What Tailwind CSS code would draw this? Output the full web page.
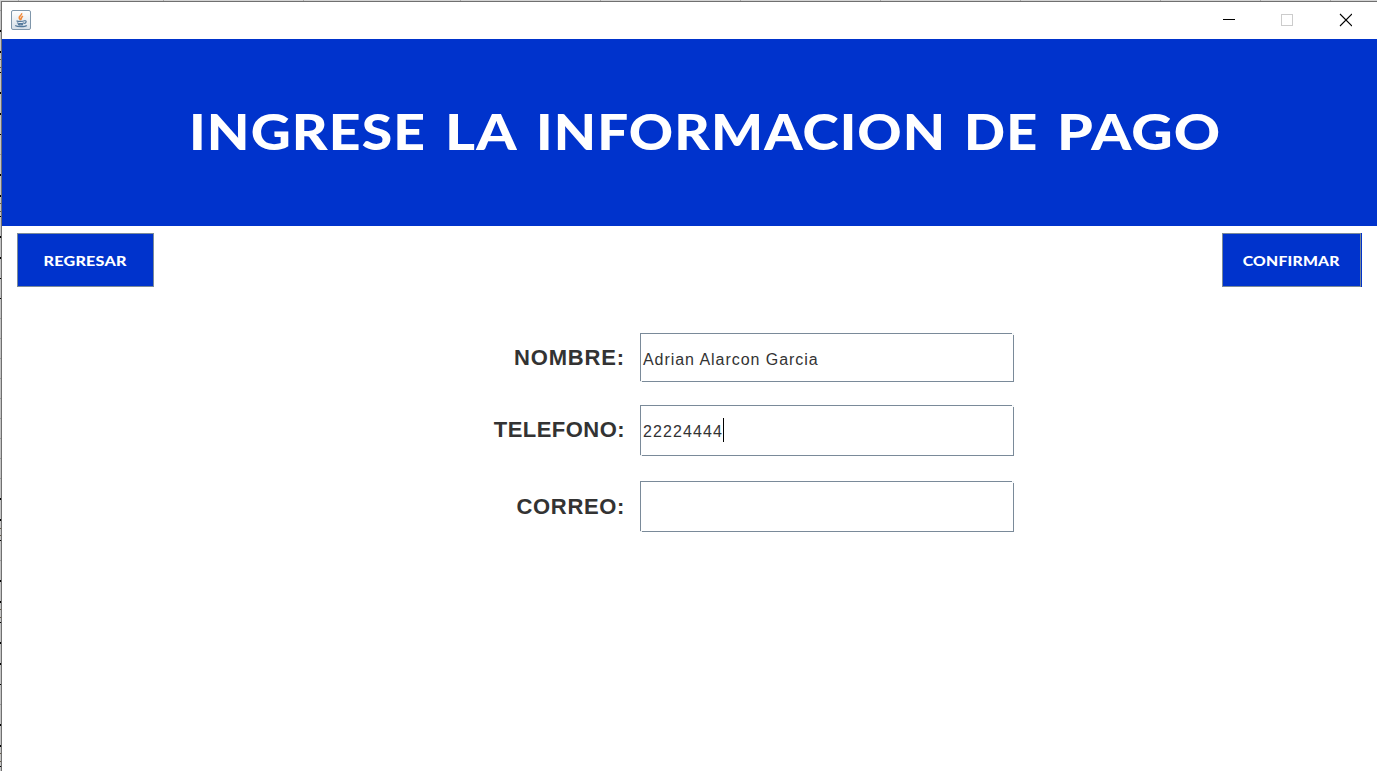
<!DOCTYPE html>
<html lang="es">
<head>
<meta charset="utf-8">
<title>Pago</title>
<script src="https://cdn.jsdelivr.net/npm/@tailwindcss/browser@4"></script>
</head>
<body class="h-[771px] w-[1377px] overflow-hidden bg-white">
<div class="flex h-[771px] flex-col">
  <svg class="block h-px w-full shrink-0" viewBox="0 0 1377 1" shape-rendering="crispEdges"><path fill="#d4d4d4" d="M0 0h1377v1H0z"/><path fill="#ababab" d="M18 0h1v1h-1zM163 0h1v1h-1zM303 0h1v1h-1zM460 0h1v1h-1zM600 0h1v1h-1zM740 0h1v1h-1zM880 0h1v1h-1zM1020 0h1v1h-1zM1160 0h1v1h-1zM1260 0h1v1h-1z M1330 0h1v1h-1z"/></svg>
  <div class="flex min-h-0 flex-1">
    <svg class="block h-[770px] w-px shrink-0" viewBox="0 1 1 770" shape-rendering="crispEdges" fill="none">
      <path stroke="#c4c4c4" d="M.5 0v771"/>
      <path stroke="#999" d="M.5 10v1M.5 154v1M.5 318v1M.5 338v1M.5 358v1M.5 378v1M.5 398v1M.5 418v1M.5 438v1M.5 458v1M.5 478v1M.5 560v1M.5 704v1"/>
      <path stroke="#000" d="M.5 30v2M.5 51v2M.5 72v1M.5 92v2M.5 113v2M.5 134v1M.5 174v2M.5 195v2M.5 216v1M.5 236v2M.5 257v2M.5 278v1M.5 298v1M.5 498v2M.5 519v2M.5 540v1M.5 580v2M.5 601v2M.5 622v1M.5 642v2M.5 663v2M.5 684v1M.5 724v2M.5 745v2M.5 766v1"/>
      <path stroke="#655c48" d="M.5 59v1M.5 67v1M.5 203v1M.5 211v1M.5 528v1M.5 535v1M.5 609v1M.5 617v1M.5 753v1M.5 761v1"/>
    </svg>
    <main class="flex min-w-0 flex-1 flex-col border-t border-l border-[#707070] bg-white">
      <header class="flex h-[37px] shrink-0 items-start justify-between pl-[9px] pr-[25px] pt-2">
        <svg class="size-5" viewBox="0 0 20 20" fill="none">
          <defs><linearGradient id="tile" x2="0" y2="1"><stop stop-color="#fff"/><stop offset="1" stop-color="#d5dfe8"/></linearGradient></defs>
          <rect x=".5" y=".5" width="19" height="19" rx="1.5" fill="url(#tile)" stroke="#7f96aa"/>
          <path d="M10.600 3.200c1 2-3.200 2.800-2.400 4.800.3.900 1.300 1.400 1.500 2.200M12 6.200c-1.600.9-2.500 1.700-1.500 3.500" stroke="#f08a3c" stroke-width="1.500"/>
          <path d="M5.500 10.700c1.500 1 6 1 8 0M6 12.700c2 1 5.300 1 7 0M7 14.400c1.700.7 3.700.7 5 0M13.500 10.500c2.500 0 2 2.500-.5 3M4.200 15.500c2 1.600 9.800 1.600 11.600 0" stroke="#54799b" stroke-width="1.200"/>
        </svg>
        <svg class="h-5 w-[130px]" viewBox="1222 10 130 20" fill="none" shape-rendering="crispEdges">
          <path d="M1223 19.500h12" stroke="#000"/>
          <rect x="1281.500" y="14.500" width="11" height="11" stroke="#ccc"/>
          <path d="M1340 14l12 12M1352 14l-12 12" stroke="#000" stroke-width="1.100" shape-rendering="auto"/>
        </svg>
      </header>
      <section class="flex h-[187px] shrink-0 bg-[#0033cc]">
        <h1 class="ml-[187px] mt-[60px] h-16 whitespace-nowrap font-['Lato'] text-[50px] font-black leading-[64px] text-white">
          <span class="inline-block w-[256px] origin-left scale-x-[1.105] tracking-[1px]">INGRESE</span><span class="inline-block w-[91px] origin-left scale-x-[1.15] tracking-[1px]">LA</span><span class="inline-block w-[428px] origin-left scale-x-[1.095] tracking-[1px]">INFORMACION</span><span class="inline-block w-[93px] origin-left scale-x-[1.08] tracking-[1px]">DE</span><span class="inline-block origin-left scale-x-[1.145] tracking-[1px]">PAGO</span>
        </h1>
      </section>
      <nav class="flex h-[62px] shrink-0 justify-between px-[15px] pt-[7px] font-['Lato'] text-[14px] font-black text-white">
        <button class="h-[54px] w-[137px] border border-[#7a8a99] bg-[#0033cc] pt-px"><span class="inline-block scale-x-[1.15] tracking-[0.2px]">REGRESAR</span></button>
        <div class="h-[54px] w-[140px] border-r border-[#0033cc]"><button class="h-[54px] w-[139px] border border-[#7a8a99] bg-[#0033cc] pt-px"><span class="inline-block scale-x-[1.12] tracking-[0.2px]">CONFIRMAR</span></button></div>
      </nav>
      <form class="flex flex-col pt-[45px] font-['Liberation_Sans'] text-[#333]">
        <div class="mb-[23px] flex h-[49px]">
          <label class="w-[623px] text-right text-[22px] font-bold leading-[49px] tracking-[0.85px]">NOMBRE:</label>
          <div class="relative ml-[15px] flex w-[374px] items-center border border-[#7a8a99] pl-[2px] pt-[5px] text-[16px] tracking-[0.95px]">Adrian Alarcon Garcia<i class="absolute -right-px -top-px size-0.5 bg-[linear-gradient(45deg,#fff,#eef0f2)]"></i><i class="absolute -bottom-px -left-px h-px w-0.5 bg-[#eef0f2]"></i></div>
        </div>
        <div class="mb-[25px] flex h-[51px]">
          <label class="w-[623px] text-right text-[22px] font-bold leading-[49px] tracking-[0.45px]">TELEFONO:</label>
          <div class="relative ml-[15px] flex w-[374px] items-start border border-[#7a8a99] pl-[2px] pt-3 text-[16px] leading-[28px] tracking-[1.100px]"><span>22224444</span><i class="h-6 w-px bg-black"></i><i class="absolute -right-px -top-px size-0.5 bg-[linear-gradient(45deg,#fff,#eef0f2)]"></i><i class="absolute -bottom-px -left-px h-px w-0.5 bg-[#eef0f2]"></i></div>
        </div>
        <div class="flex h-[51px]">
          <label class="w-[623px] text-right text-[22px] font-bold leading-[51px] tracking-[0.65px]">CORREO:</label>
          <div class="relative ml-[15px] w-[374px] border border-[#7a8a99]"><i class="absolute -right-px -top-px size-0.5 bg-[linear-gradient(45deg,#fff,#eef0f2)]"></i><i class="absolute -bottom-px -left-px h-px w-0.5 bg-[#eef0f2]"></i></div>
        </div>
      </form>
    </main>
  </div>
</div>
</body>
</html>
